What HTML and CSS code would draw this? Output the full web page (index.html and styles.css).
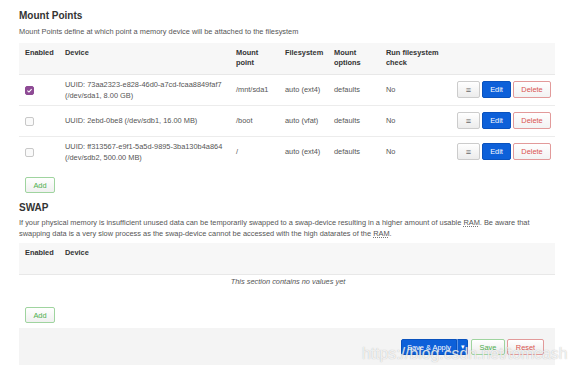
FILE: index.html
```html
<!DOCTYPE html>
<html lang="en">
<head>
<meta charset="utf-8"/>
<meta content="width=device-width, initial-scale=1.0" name="viewport"/>
<title>Mount Points</title>
<link rel="stylesheet" href="styles.css">
</head>
<body>
<main class="page">
<section class="cbi-section">
<h2>Mount Points</h2>
<p class="desc">Mount Points define at which point a memory device will be attached to the filesystem</p>
<table class="cbi-table">
<colgroup>
<col class="c-enabled"><col class="c-device"><col class="c-mount"><col class="c-fs"><col class="c-opts"><col class="c-check"><col class="c-actions">
</colgroup>
<thead>
<tr><th>Enabled</th><th>Device</th><th>Mount point</th><th>Filesystem</th><th>Mount options</th><th>Run filesystem check</th><th></th></tr>
</thead>
<tbody>
<tr>
<td><span class="check checked"><svg viewBox="0 0 10 10" width="7" height="7"><path d="M2 5.2 L4.2 7.2 L8 3" fill="none" stroke="#fff" stroke-width="1.6"/></svg></span></td>
<td>UUID: 73aa2323-e828-46d0-a7cd-fcaa8849faf7 (/dev/sda1, 8.00 GB)</td>
<td>/mnt/sda1</td><td>auto (ext4)</td><td>defaults</td><td>No</td>
<td class="actions"><button class="btn btn-more">&#8801;</button><button class="btn btn-edit">Edit</button><button class="btn btn-del">Delete</button></td>
</tr>
<tr>
<td><span class="check"></span></td>
<td>UUID: 2ebd-0be8 (/dev/sdb1, 16.00 MB)</td>
<td>/boot</td><td>auto (vfat)</td><td>defaults</td><td>No</td>
<td class="actions"><button class="btn btn-more">&#8801;</button><button class="btn btn-edit">Edit</button><button class="btn btn-del">Delete</button></td>
</tr>
<tr class="last">
<td><span class="check"></span></td>
<td>UUID: ff313567-e9f1-5a5d-9895-3ba130b4a864 (/dev/sdb2, 500.00 MB)</td>
<td>/</td><td>auto (ext4)</td><td>defaults</td><td>No</td>
<td class="actions"><button class="btn btn-more">&#8801;</button><button class="btn btn-edit">Edit</button><button class="btn btn-del">Delete</button></td>
</tr>
</tbody>
</table>
<div class="add-row"><button class="btn btn-add">Add</button></div>
</section>

<section class="cbi-section swap">
<h2>SWAP</h2>
<p class="desc">If your physical memory is insufficient unused data can be temporarily swapped to a swap-device resulting in a higher amount of usable <abbr>RAM</abbr>. Be aware that swapping data is a very slow process as the swap-device cannot be accessed with the high datarates of the <abbr>RAM</abbr>.</p>
<table class="cbi-table">
<colgroup><col class="c-enabled"><col></colgroup>
<thead><tr><th>Enabled</th><th>Device</th></tr></thead>
<tbody><tr class="empty"><td colspan="2">This section contains no values yet</td></tr></tbody>
</table>
<div class="add-row"><button class="btn btn-add">Add</button></div>
</section>

<div class="page-actions">
<div class="btn-split"><button class="btn btn-apply">Save &amp; Apply</button><button class="btn btn-apply btn-drop">&#9662;</button></div>
<button class="btn btn-save">Save</button>
<button class="btn btn-reset">Reset</button>
</div>
</main>
<div class="watermark">https://blog.csdn.net/tomcash</div>
</body>
</html>
```

FILE: styles.css
```css
* {
  box-sizing: border-box;
}

body {
  margin: 0;
  font-family: "Liberation Sans", Arial, sans-serif;
  font-size: 7.4px;
  color: #404040;
  background: #fff;
}

.page {
  width: 555px;
  padding: 10px 0 0 19px;
}

.cbi-section h2 {
  margin: 0;
  font-size: 10px;
  line-height: 12px;
  color: #333;
}

.desc {
  margin: 4px 0 6px;
  line-height: 11px;
  color: #555;
}

abbr {
  text-decoration: underline dotted #777;
}

.cbi-table {
  width: 536px;
  border-collapse: collapse;
  table-layout: fixed;
}

.c-enabled { width: 40px; }
.c-device { width: 171px; }
.c-mount { width: 49px; }
.c-fs { width: 49px; }
.c-opts { width: 52px; }
.c-check { width: 69px; }
.c-actions { width: 106px; }

.cbi-table th {
  background: #f7f7f7;
  text-align: left;
  vertical-align: top;
  font-weight: bold;
  color: #333;
  line-height: 10px;
  padding: 5px 4px 5px 6px;
  height: 31px;
  border-bottom: 1px solid #e8e8e8;
}

.cbi-table td {
  height: 31px;
  line-height: 11px;
  padding: 0 4px 0 6px;
  vertical-align: middle;
  color: #555;
  border-bottom: 1px solid #ececec;
}

.cbi-table tr.last td {
  border-bottom: none;
}

.cbi-table td.actions {
  text-align: right;
  padding-right: 6px;
  white-space: nowrap;
}

.check {
  display: inline-block;
  width: 9px;
  height: 9px;
  border: 1px solid #c8c8c8;
  border-radius: 2px;
  background: #fafafa;
  vertical-align: middle;
}

.check.checked {
  background: #8e4b95;
  border-color: #8e4b95;
}

.check svg {
  display: block;
}

.btn {
  font-family: inherit;
  font-size: 7.4px;
  height: 17px;
  padding: 0 6px;
  border-radius: 2px;
  border: 1px solid #ccc;
  background: linear-gradient(#fff, #ececec);
  color: #555;
  cursor: pointer;
  vertical-align: middle;
}

.actions .btn {
  margin-left: 2px;
}

.btn-more {
  width: 23px;
  padding: 0;
  font-size: 9px;
  color: #666;
}

.btn-edit {
  width: 29px;
  padding: 0;
  background: #0d60d9;
  border-color: #0a52bd;
  color: #fff;
}

.btn-del {
  width: 38px;
  padding: 0;
  background: linear-gradient(#fff, #f2f2f2);
  border-color: #e29a9a;
  color: #d9534f;
}

.add-row {
  padding: 10px 0 9px 6px;
}

.btn-add {
  width: 30px;
  height: 16px;
  padding: 0;
  border-color: #9fd49f;
  color: #4cae4c;
  background: linear-gradient(#fff, #f0f0f0);
}

.swap .desc {
  margin: 3px 0 4px;
  width: 536px;
}

.cbi-table tr.empty td {
  height: 15px;
  text-align: center;
  font-style: italic;
  color: #555;
  border-bottom: none;
  padding-top: 0;
}

.swap .add-row {
  padding: 18px 0 5px 6px;
}

.page-actions {
  width: 536px;
  height: 37px;
  background: #f4f4f4;
  display: flex;
  align-items: center;
  justify-content: flex-end;
  gap: 2px;
  padding: 1px 11px 0 0;
}

.btn-split {
  display: flex;
  margin-right: 1px;
}

.btn-apply {
  height: 16px;
  background: #0d60d9;
  border-color: #0a52bd;
  color: #fff;
  width: 56px;
  padding: 0;
  border-radius: 2px 0 0 2px;
}

.btn-drop {
  width: 11px;
  font-size: 7px;
  border-left: 1px solid #5b93e6;
  border-radius: 0 2px 2px 0;
}

.btn-save {
  height: 16px;
  width: 34px;
  padding: 0;
  border-color: #9fd49f;
  color: #4cae4c;
}

.btn-reset {
  height: 16px;
  width: 37px;
  padding: 0;
  border-color: #e29a9a;
  color: #d9534f;
}

.watermark {
  position: absolute;
  left: 362px;
  top: 344px;
  font-family: "Liberation Sans", Arial, sans-serif;
  font-size: 15.8px;
  line-height: 20px;
  color: rgba(255, 255, 255, 0.8);
  text-shadow: 0 0 1px rgba(120, 120, 120, 0.55);
}
```
